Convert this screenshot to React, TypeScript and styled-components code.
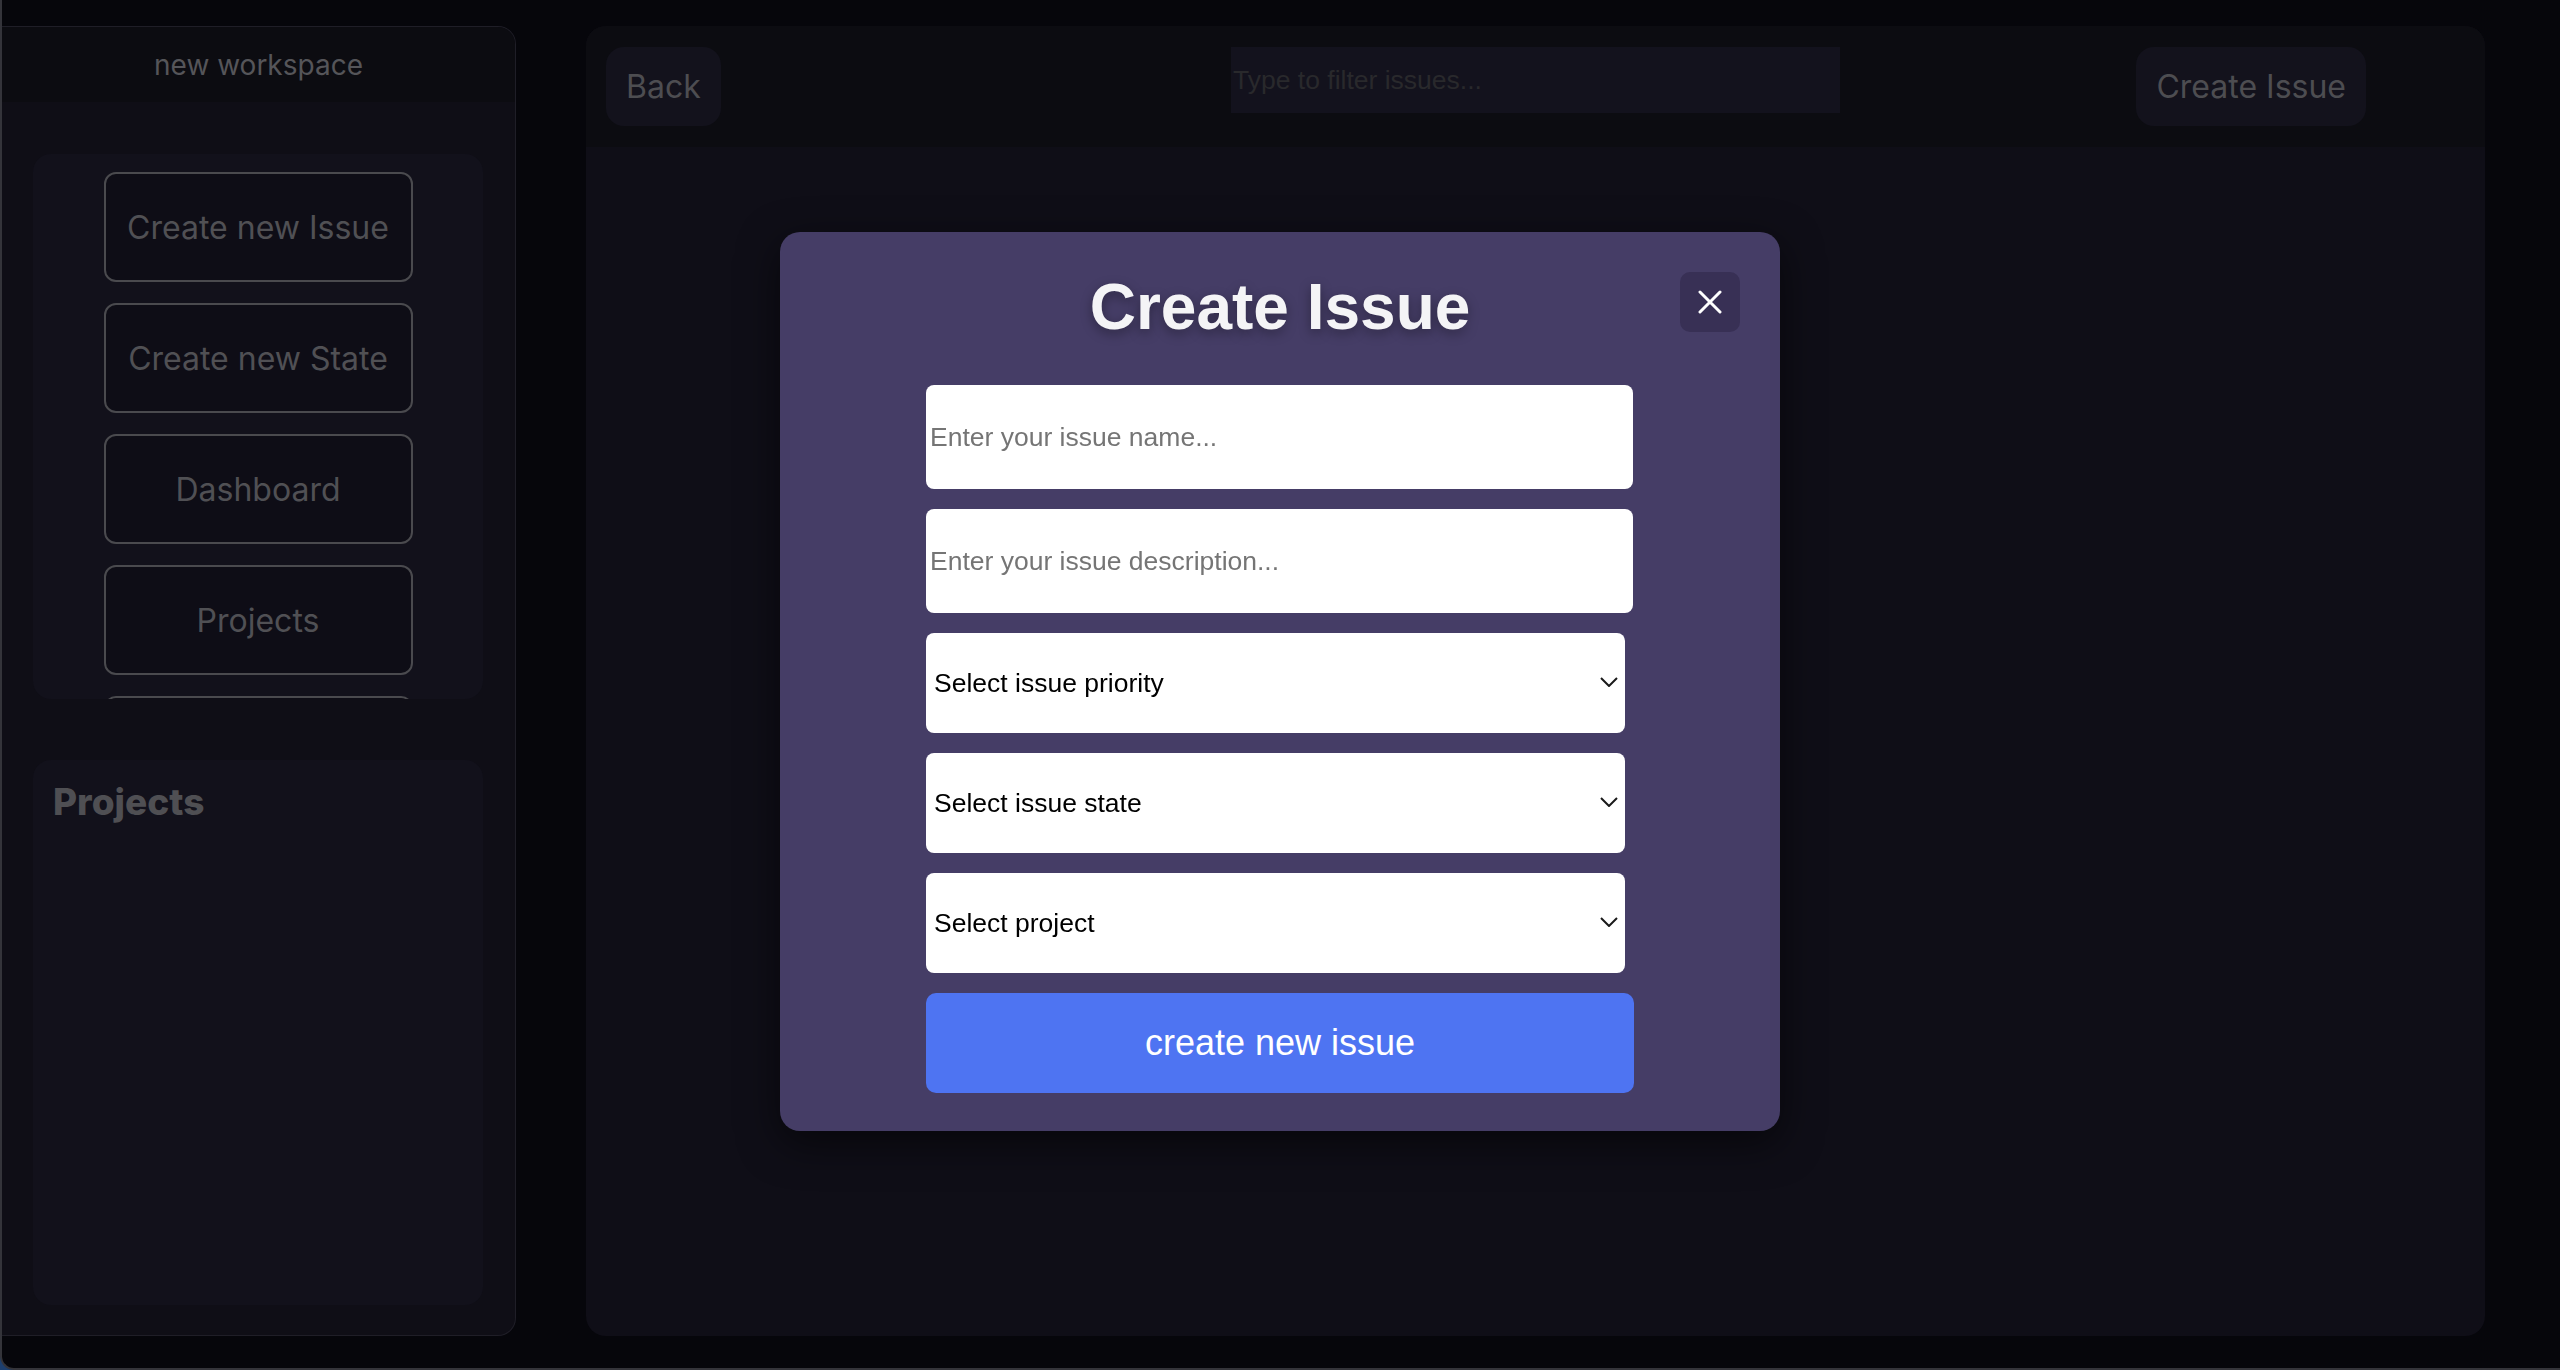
import styled, { createGlobalStyle } from 'styled-components';

const GlobalStyle = createGlobalStyle`
  html, body {
    margin: 0;
    padding: 0;
    height: 100%;
    background: #1d3f6e;
    font-family: Inter, "Liberation Sans", sans-serif;
  }
  * {
    box-sizing: border-box;
  }
`

const Frame = styled.div`
  height: 100vh;
  display: flex;
  gap: 70px;
  padding: 26px 75px 32px 0;
  background: #06060b;
  border-left: 2px solid #34343a;
  border-bottom: 2px solid #34343a;
  border-bottom-left-radius: 14px;
  overflow: hidden;
`

const Sidebar = styled.aside`
  width: 514px;
  flex-shrink: 0;
  display: flex;
  flex-direction: column;
  background: #0f0e16;
  border: 1px solid #1f1e27;
  border-left: none;
  border-radius: 0 18px 18px 0;
  overflow: hidden;
`

const SidebarHeader = styled.div`
  height: 75px;
  display: flex;
  align-items: center;
  justify-content: center;
  background: #0c0c11;
  color: #555559;
  font-size: 28px;
`

const SidebarBody = styled.div`
  flex: 1;
  display: flex;
  flex-direction: column;
  gap: 61px;
  padding: 52px 32px 30px 31px;
`

const NavBox = styled.nav`
  height: 545px;
  flex-shrink: 0;
  display: flex;
  flex-direction: column;
  align-items: center;
  gap: 21px;
  padding-top: 18px;
  background: #12111b;
  border-radius: 18px;
  overflow: hidden;
`

const NavButton = styled.div`
  width: 309px;
  height: 110px;
  flex-shrink: 0;
  display: flex;
  align-items: center;
  justify-content: center;
  background: #0e0d16;
  border: 2px solid #4a4a4e;
  border-radius: 12px;
  color: #505054;
  font-size: 32px;
`

const ProjectsBox = styled.section`
  flex: 1;
  padding: 19px 20px;
  background: #12111b;
  border-radius: 18px;
`

const ProjectsTitle = styled.h2`
  margin: 0;
  color: #4f4f53;
  font-size: 37px;
  font-weight: 800;
`

const Main = styled.main`
  flex: 1;
  display: flex;
  flex-direction: column;
  background: #0f0e17;
  border-radius: 20px;
  overflow: hidden;
`

const Toolbar = styled.header`
  height: 121px;
  flex-shrink: 0;
  display: grid;
  grid-template-columns: 1fr auto 1fr;
  align-items: start;
  padding: 21px 20px;
  background: #0c0c11;
`

const ToolButton = styled.button<{ $right?: boolean }>`
  justify-self: ${p => (p.$right ? 'end' : 'start')};
  margin-right: ${p => (p.$right ? '99px' : '0')};
  height: 79px;
  padding: 0 20px;
  border: none;
  border-radius: 18px;
  background: #13121c;
  color: #4d4d51;
  font-family: Inter, "Liberation Sans", sans-serif;
  font-size: 32px;
`

const FilterInput = styled.input`
  width: 609px;
  height: 66px;
  padding: 0 2px;
  border: none;
  outline: none;
  background: #13121d;
  color: #aaa;
  font-family: "Liberation Sans", Arial, sans-serif;
  font-size: 26.5px;

  &::placeholder {
    color: #29292c;
  }
`

const Overlay = styled.div`
  position: fixed;
  inset: 0;
  display: flex;
  align-items: center;
  justify-content: center;
  padding-bottom: 7px;
`

const Modal = styled.div`
  position: relative;
  width: 1000px;
  padding: 38px 0 38px;
  background: #453d66;
  border-radius: 20px;
  box-shadow: 0 12px 40px rgba(0, 0, 0, 0.55);
  font-family: "Liberation Sans", Arial, sans-serif;
`

const Title = styled.h1`
  margin: 0;
  line-height: 74px;
  text-align: center;
  color: #f4f4f6;
  font-size: 64px;
  font-weight: 700;
  text-shadow: 0 4px 12px rgba(0, 0, 0, 0.35);
`

const CloseButton = styled.button`
  position: absolute;
  top: 40px;
  right: 40px;
  width: 60px;
  height: 60px;
  display: flex;
  align-items: center;
  justify-content: center;
  padding: 0;
  border: none;
  border-radius: 10px;
  background: #383055;
`

const Form = styled.form`
  width: 708px;
  margin: 41px auto 0;
  display: flex;
  flex-direction: column;
  align-items: flex-start;
  gap: 20px;
`

const TextField = styled.input`
  width: 707px;
  height: 104px;
  padding: 0 4px;
  border: none;
  outline: none;
  border-radius: 8px;
  background: #fff;
  color: #111;
  font-family: "Liberation Sans", Arial, sans-serif;
  font-size: 26.5px;

  &::placeholder {
    color: #757575;
  }
`

const SelectWrap = styled.div`
  position: relative;
  width: 699px;
  height: 100px;
`

const Select = styled.select`
  width: 100%;
  height: 100%;
  padding: 0 40px 0 8px;
  appearance: none;
  border: none;
  outline: none;
  border-radius: 8px;
  background: #fff;
  color: #000;
  font-family: "Liberation Sans", Arial, sans-serif;
  font-size: 26.5px;
`

const Chevron = styled.svg`
  position: absolute;
  right: 7px;
  top: 50%;
  width: 18px;
  height: 10px;
  margin-top: -6px;
  pointer-events: none;
`

const SubmitButton = styled.button`
  width: 708px;
  height: 100px;
  border: none;
  border-radius: 10px;
  background: #4e74f2;
  color: #fff;
  font-family: "Liberation Sans", Arial, sans-serif;
  font-size: 36px;
`

const navItems = ['Create new Issue', 'Create new State', 'Dashboard', 'Projects', '']

const selects = ['Select issue priority', 'Select issue state', 'Select project']

const Dropdown = ({ label }: { label: string }) => (
  <SelectWrap>
    <Select defaultValue="">
      <option value="">{label}</option>
    </Select>
    <Chevron viewBox="0 0 18 10">
      <path d="M1 1 L9 9 L17 1" fill="none" stroke="#1a1a1a" strokeWidth="2" />
    </Chevron>
  </SelectWrap>
)

export default function App() {
  return (
    <>
      <GlobalStyle />
      <Frame>
        <Sidebar>
          <SidebarHeader>new workspace</SidebarHeader>
          <SidebarBody>
            <NavBox>
              {navItems.map((item, i) => (
                <NavButton key={i}>{item}</NavButton>
              ))}
            </NavBox>
            <ProjectsBox>
              <ProjectsTitle>Projects</ProjectsTitle>
            </ProjectsBox>
          </SidebarBody>
        </Sidebar>
        <Main>
          <Toolbar>
            <ToolButton>Back</ToolButton>
            <FilterInput placeholder="Type to filter issues..." />
            <ToolButton $right>Create Issue</ToolButton>
          </Toolbar>
        </Main>
      </Frame>
      <Overlay>
        <Modal>
          <Title>Create Issue</Title>
          <CloseButton aria-label="close">
            <svg width="24" height="24" viewBox="0 0 24 24">
              <path d="M2 2 L22 22 M22 2 L2 22" stroke="#fff" strokeWidth="3" strokeLinecap="round" />
            </svg>
          </CloseButton>
          <Form onSubmit={e => e.preventDefault()}>
            <TextField placeholder="Enter your issue name..." />
            <TextField placeholder="Enter your issue description..." />
            {selects.map(s => (
              <Dropdown key={s} label={s} />
            ))}
            <SubmitButton type="submit">create new issue</SubmitButton>
          </Form>
        </Modal>
      </Overlay>
    </>
  );
}
